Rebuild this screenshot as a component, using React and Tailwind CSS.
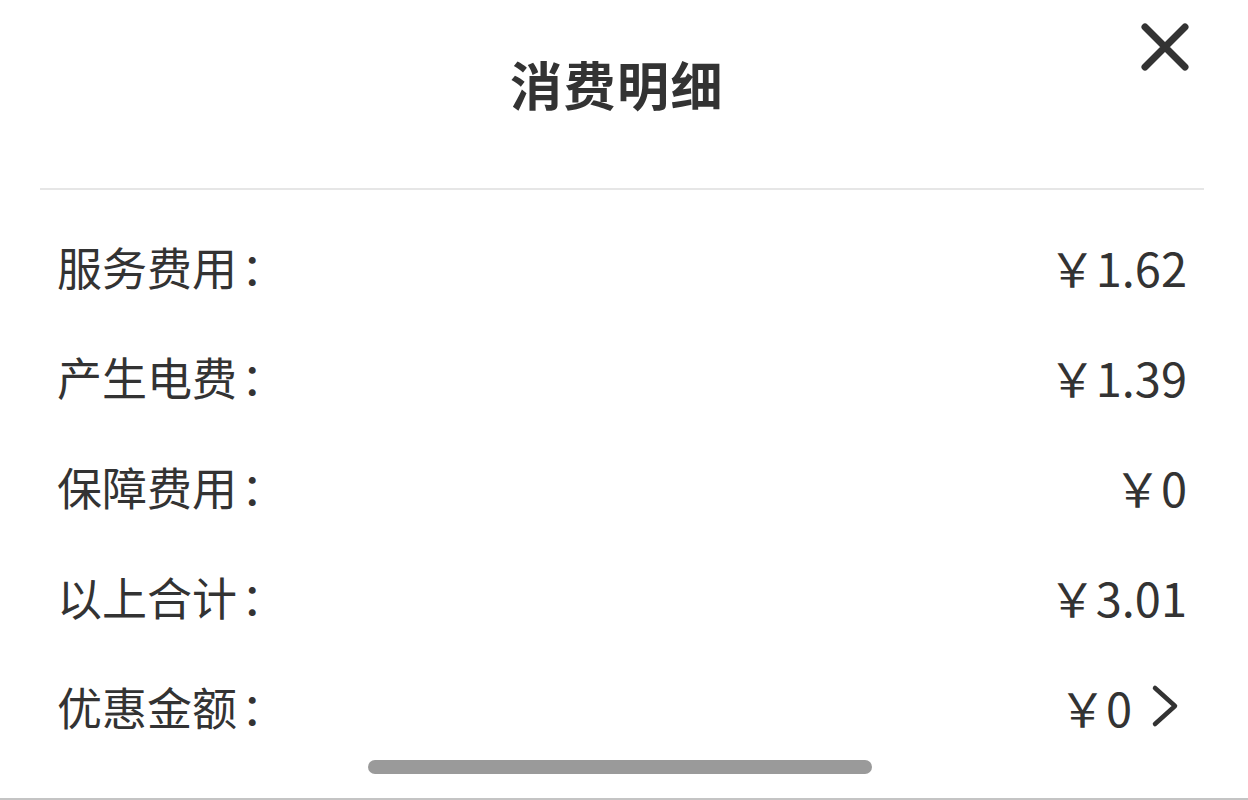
const rows = [
  { label: "服务费用", value: "￥1.62" },
  { label: "产生电费", value: "￥1.39" },
  { label: "保障费用", value: "￥0" },
  { label: "以上合计", value: "￥3.01" },
  { label: "优惠金额", value: "￥0", more: true },
];

function App() {
  return (
    <div
      className="relative w-[1248px] h-[800px] bg-white text-[#333] overflow-hidden border-b-2 border-[#c4c4c4]"
      style={{ fontFamily: '"Noto Sans CJK SC", "Noto Sans", sans-serif' }}
    >
      {/* header */}
      <div className="h-[188px] flex items-center justify-center pb-[20px] pr-[14px]">
        <h1 className="text-[52px] font-bold leading-none tracking-[1.5px]">消费明细</h1>
      </div>
      <button className="absolute left-[1140px] top-[22px]">
        <svg width="50" height="50" viewBox="0 0 50 50" fill="none" stroke="#333" strokeWidth="7" strokeLinecap="round">
          <path d="M5 5 L45 45 M45 5 L5 45" />
        </svg>
      </button>

      <div className="ml-[40px] mr-[44px] h-[2px] bg-[#e6e6e6]" />

      {/* rows */}
      <div className="pt-[21px] pl-[57px] pr-[61px]">
        {rows.map((r) => (
          <div key={r.label} className="h-[110px] flex items-center justify-between">
            <span className="text-[45px] leading-none">
              {r.label}
              <span className="ml-[4px]">：</span>
            </span>
            <span className="flex items-center text-[47px] leading-none">
              {r.value}
              {r.more && (
                <svg
                  width="28"
                  height="44"
                  viewBox="0 0 28 44"
                  className="ml-[19px] mr-[8px]"
                  fill="none"
                  stroke="#333"
                  strokeWidth="4.5"
                  strokeLinecap="round"
                  strokeLinejoin="round"
                >
                  <path d="M4 4 L24 22 L4 40" />
                </svg>
              )}
            </span>
          </div>
        ))}
      </div>

      {/* scroll indicator */}
      <div className="absolute left-[368px] top-[760px] w-[504px] h-[14px] rounded-full bg-[#9a9a9a]" />
    </div>
  );
}

export default App;
